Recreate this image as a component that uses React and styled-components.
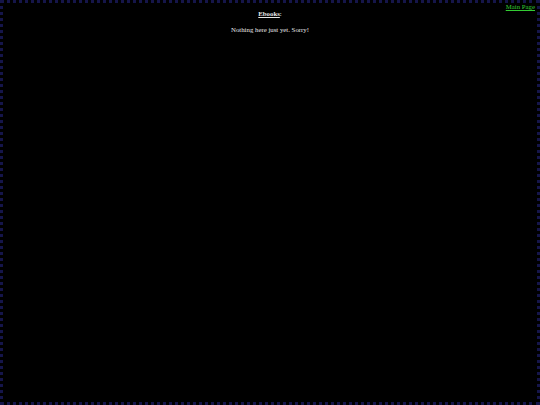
import React from "react";
import styled, { createGlobalStyle } from "styled-components";

const GlobalStyle = createGlobalStyle`
  html, body {
    margin: 0;
    padding: 0;
    background: #000;
  }
`;

const Page = styled.div`
  box-sizing: border-box;
  width: 540px;
  height: 405px;
  border: 3px dotted #15154a;
  background: #000;
  color: #e8e8e8;
  font-family: "Liberation Serif", "Times New Roman", serif;
  font-size: 6.8px;
  display: flex;
  flex-direction: column;
  align-items: center;
  position: relative;
`;

const TopLink = styled.a`
  position: absolute;
  top: 0;
  right: 2px;
  color: #33cc33;
  text-decoration: underline;
`;

const Heading = styled.p`
  margin: 7px 0 0;
  & b {
    text-decoration: underline;
  }
`;

const Message = styled.p`
  margin: 9px 0 0;
`;

export default function App() {
  return (
    <>
      <GlobalStyle />
      <Page>
        <TopLink href="#">Main Page</TopLink>
        <Heading>
          <b>Ebooks</b>:
        </Heading>
        <Message>Nothing here just yet. Sorry!</Message>
      </Page>
    </>
  );
}
